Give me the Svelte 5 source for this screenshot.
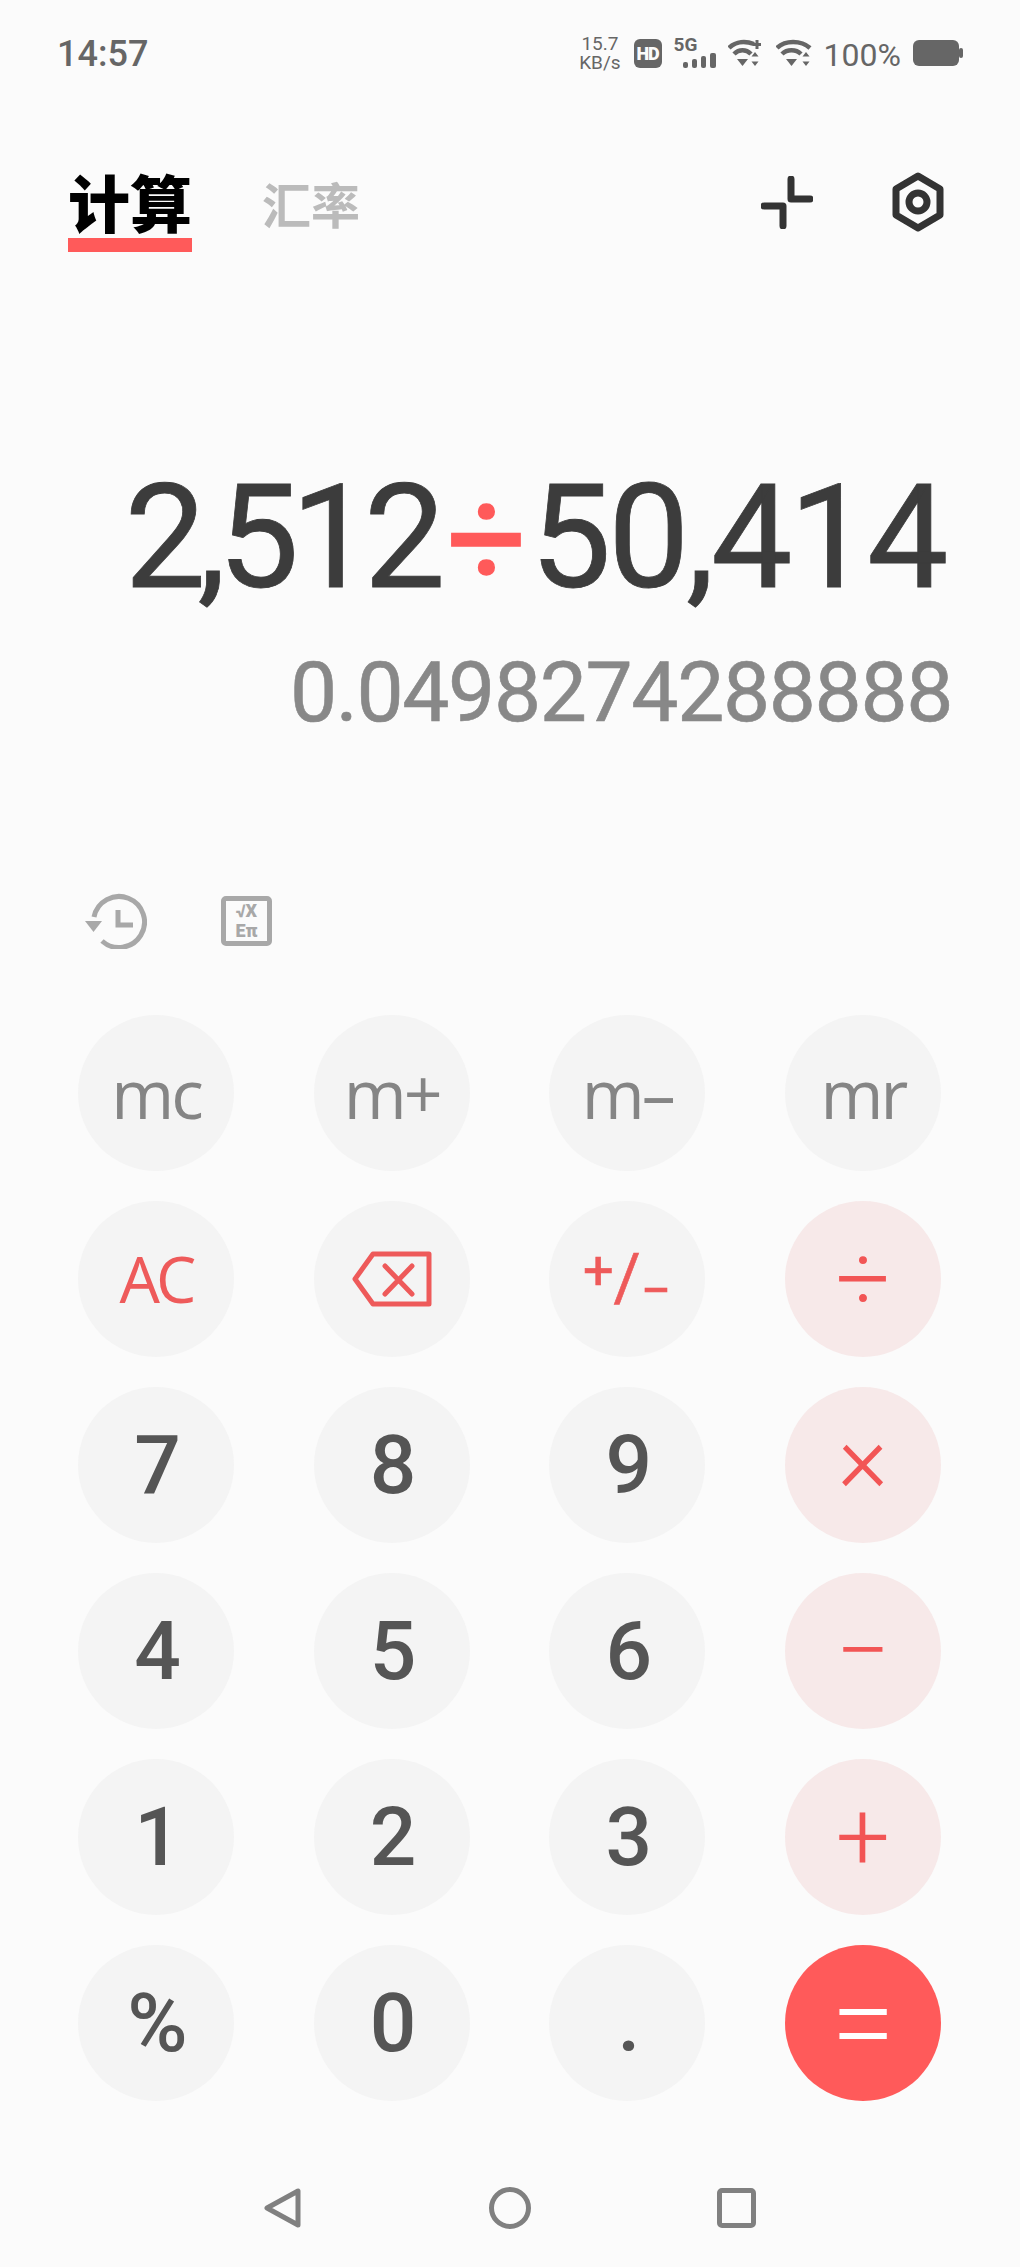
<script>
	const keys = [
		{ label: 'mc', kind: 'mem' },
		{ label: 'm+', kind: 'mem' },
		{ label: 'm–', kind: 'mem' },
		{ label: 'mr', kind: 'mem' },
		{ label: 'AC', kind: 'fn' },
		{ icon: 'back', kind: 'fn' },
		{ icon: 'sign', kind: 'fn' },
		{ label: '÷', kind: 'op' },
		{ label: '7', kind: 'num' },
		{ label: '8', kind: 'num' },
		{ label: '9', kind: 'num' },
		{ label: '×', kind: 'op times' },
		{ label: '4', kind: 'num' },
		{ label: '5', kind: 'num' },
		{ label: '6', kind: 'num' },
		{ label: '−', kind: 'op' },
		{ label: '1', kind: 'num' },
		{ label: '2', kind: 'num' },
		{ label: '3', kind: 'num' },
		{ label: '+', kind: 'op' },
		{ label: '%', kind: 'num' },
		{ label: '0', kind: 'num' },
		{ label: '.', kind: 'num' },
		{ label: '=', kind: 'eq' }
	];
</script>

<div class="page">
	<header class="status">
		<span class="time">14:57</span>
		<div class="status-right">
			<div class="speed"><span>15.7</span><span>KB/s</span></div>
			<span class="hd">HD</span>
			<div class="net">
				<span class="five-g">5G</span>
				<svg width="33" height="15" viewBox="0 0 33 15" fill="#666">
					<rect x="0" y="9" width="5" height="6" rx="2" />
					<rect x="9" y="6" width="5" height="9" rx="2" />
					<rect x="18" y="3" width="5" height="12" rx="2" />
					<rect x="27" y="0" width="6" height="15" rx="2" />
				</svg>
			</div>
			<svg class="wifi" width="36" height="28" viewBox="0 0 36 28" fill="none" stroke="#666" stroke-width="4.500">
				<path d="M1 9C8 2 18 2 26 5" />
				<path d="M6 15C11 10 18 10 23 15" />
				<path d="M29 1V10M25 5.500H33" stroke-width="3" />
				<path d="M9 20h11l-5.500 7z" fill="#666" stroke="none" />
				<path d="M27 13l3.500 4.500h-7zM27 27l3.500-4.500h-7z" fill="#666" stroke="none" />
			</svg>
			<svg class="wifi" width="36" height="28" viewBox="0 0 36 28" fill="none" stroke="#666" stroke-width="4.500">
				<path d="M1 9C9 1 25 1 34 9" />
				<path d="M6 15C11 10 20 10 25 15" />
				<path d="M10 20h11l-5.500 7z" fill="#666" stroke="none" />
				<path d="M30 13l3.500 4.500h-7zM30 27l3.500-4.500h-7z" fill="#666" stroke="none" />
			</svg>
			<span class="percent">100%</span>
			<svg width="50" height="26" viewBox="0 0 50 26" fill="#666">
				<rect x="0" y="0" width="46" height="26" rx="6" />
				<rect x="46" y="8" width="4" height="10" rx="2" />
			</svg>
		</div>
	</header>

	<nav class="tabs">
		<div class="tab-group">
			<div class="tab active">计算</div>
			<div class="tab">汇率</div>
		</div>
		<div class="tab-icons">
			<svg width="52" height="53" viewBox="0 0 52 53" fill="none" stroke="#333" stroke-width="7" stroke-linecap="round" stroke-linejoin="round">
				<path d="M30 3V23H49" />
				<path d="M3 30H22V50" />
			</svg>
			<svg width="52" height="60" viewBox="0 0 52 60" fill="none" stroke="#333" stroke-width="7">
				<path d="M26 4L48 17V43L26 56L4 43V17Z" stroke-linejoin="round" />
				<circle cx="26" cy="30" r="9" />
			</svg>
		</div>
	</nav>

	<section class="display">
		<div class="expr"><span class="lhs">2,512</span><span class="op-sign">÷</span><span class="rhs">50,414</span></div>
		<div class="result">0.0498274288888</div>
	</section>

	<div class="tools">
		<svg width="62" height="56" viewBox="0 0 62 56" fill="none" stroke="#a8a8a8" stroke-width="5">
			<path d="M9 24A25.500 25.500 0 1 1 17 48" />
			<path d="M33 17V32H48" />
			<path d="M0 28H17L8.500 39Z" fill="#a8a8a8" stroke="none" />
		</svg>
		<div class="sci">
			<span>√X</span>
			<span>Eπ</span>
		</div>
	</div>

	<div class="keypad">
		{#each keys as key}
			<button class="key {key.kind}">
				{#if key.icon === 'back'}
					<svg width="80" height="56" viewBox="0 0 80 56" fill="none" stroke="#ee5a5a" stroke-width="5" stroke-linejoin="round">
						<path d="M77 3H21L3 28L21 53H77Z" />
						<path d="M33 15L60 43M60 15L33 43" stroke-linecap="round" />
					</svg>
				{:else if key.icon === 'sign'}
					<span class="sign"><span class="plus">+</span><span class="slash">/</span><span class="minus">−</span></span>
				{:else}
					{key.label}
				{/if}
			</button>
		{/each}
	</div>

	<footer class="navbar">
		<svg width="38" height="40" viewBox="0 0 38 40" fill="none" stroke="#808080" stroke-width="5" stroke-linejoin="round">
			<path d="M34 3V37L3 20Z" />
		</svg>
		<div class="home"></div>
		<div class="recent"></div>
	</footer>
</div>

<style>
	:global(body) {
		background: #fbfbfb;
	}

	.page {
		width: 1020px;
		height: 2267px;
		background: #fbfbfb;
		display: flex;
		flex-direction: column;
		font-family: Roboto, 'Noto Sans', sans-serif;
		overflow: hidden;
	}

	.status {
		height: 106px;
		box-sizing: border-box;
		padding: 36px 57px 0 57px;
		display: flex;
		justify-content: space-between;
		align-items: flex-start;
		color: #666;
	}

	.time {
		font-size: 36px;
		font-weight: 500;
		line-height: 36px;
	}

	.status-right {
		display: flex;
		align-items: center;
		height: 34px;
		gap: 12px;
	}

	.speed {
		display: flex;
		flex-direction: column;
		align-items: center;
		font-size: 19px;
		line-height: 19px;
		margin-right: 1px;
	}

	.hd {
		width: 28px;
		height: 29px;
		border-radius: 6px;
		background: #666;
		color: #fbfbfb;
		font-size: 18px;
		font-weight: 900;
		line-height: 29px;
		text-align: center;
		letter-spacing: -1px;
	}

	.net {
		width: 42px;
		height: 30px;
		display: flex;
		flex-direction: column;
		align-items: flex-end;
		position: relative;
	}

	.five-g {
		position: absolute;
		left: 0;
		top: -2px;
		font-size: 19px;
		font-weight: 700;
		line-height: 18px;
	}

	.net svg {
		margin-top: 15px;
	}

	.wifi {
		flex: none;
	}

	.percent {
		font-size: 32px;
		line-height: 34px;
		margin-top: 4px;
	}

	.tabs {
		height: 164px;
		display: flex;
		justify-content: space-between;
		padding: 0 76px 0 68px;
		align-items: flex-start;
	}

	.tab-group {
		display: flex;
		align-items: flex-end;
		gap: 70px;
		padding-top: 62px;
	}

	.tab {
		font-family: 'Noto Sans CJK SC', sans-serif;
		font-size: 49px;
		line-height: 60px;
		font-weight: 700;
		color: #bbb;
		padding-bottom: 19px;
	}

	.tab.active {
		font-size: 62px;
		line-height: 66px;
		font-weight: 900;
		color: #000;
		padding-bottom: 4px;
		border-bottom: 14px solid #ff5a5a;
	}

	.tab-icons {
		display: flex;
		gap: 79px;
		align-items: center;
		padding-top: 66px;
	}

	.display {
		height: 604px;
		box-sizing: border-box;
		padding: 192px 70px 0 0;
		text-align: right;
		white-space: nowrap;
	}

	.expr {
		font-size: 145px;
		line-height: 150px;
		color: #3c3c3c;
		margin-right: 5px;
		-webkit-text-stroke: 0.8px #3c3c3c;
	}

	.lhs {
		letter-spacing: -8.400px;
	}

	.rhs {
		letter-spacing: -3.500px;
	}

	.op-sign {
		color: #ff5a5a;
		font-size: 140px;
		margin: 0 3px 0 10px;
		-webkit-text-stroke: 1.5px #ff5a5a;
	}

	.result {
		font-size: 84px;
		line-height: 100px;
		letter-spacing: -1.4px;
		color: #888;
		margin-top: 29px;
		margin-right: -2px;
		-webkit-text-stroke: 0.6px #888;
	}

	.tools {
		height: 94px;
		display: flex;
		align-items: center;
		gap: 74px;
		padding-left: 85px;
	}

	.sci {
		box-sizing: border-box;
		width: 51px;
		height: 50px;
		border: 5px solid #a8a8a8;
		border-radius: 5px;
		color: #a8a8a8;
		font-size: 18px;
		font-weight: 900;
		line-height: 20px;
		display: flex;
		flex-direction: column;
		align-items: center;
		justify-content: center;
	}

	.keypad {
		display: grid;
		grid-template-columns: repeat(4, 156px);
		justify-content: space-between;
		row-gap: 30px;
		padding: 0 79px 0 78px;
		margin-top: 47px;
	}

	.key {
		width: 156px;
		height: 156px;
		padding: 0;
		border: none;
		border-radius: 50%;
		background: #f4f4f4;
		font-family: inherit;
		display: flex;
		align-items: center;
		justify-content: center;
		line-height: 1;
	}

	.mem {
		font-family: 'Open Sans', sans-serif;
		font-size: 68px;
		letter-spacing: -3px;
		color: #858585;
	}

	.fn {
		font-family: 'Open Sans', sans-serif;
		font-size: 64px;
		letter-spacing: -4px;
		color: #ee5a5a;
	}

	.num {
		font-size: 82px;
		font-weight: 500;
		color: #555;
		padding-left: 3px;
	}

	.op {
		background: #f7e9e9;
		font-size: 96px;
		font-weight: 350;
		color: #f25555;
	}

	.times {
		padding-bottom: 14px;
	}

	.eq {
		background: #ff5a5a;
		font-size: 116px;
		font-weight: 300;
		color: #fff;
	}

	.sign {
		display: flex;
		align-items: center;
		font-family: Roboto, sans-serif;
		font-size: 54px;
		letter-spacing: 0;
		-webkit-text-stroke: 0.6px #ee5a5a;
	}

	.plus {
		transform: translateY(-8px);
	}

	.slash {
		font-size: 66px;
	}

	.minus {
		transform: translateY(12px);
	}

	.navbar {
		margin-top: 85px;
		height: 44px;
		display: flex;
		align-items: center;
		justify-content: space-between;
		padding: 0 264px 0 264px;
	}

	.home {
		box-sizing: border-box;
		width: 42px;
		height: 42px;
		border: 5px solid #808080;
		border-radius: 50%;
	}

	.recent {
		box-sizing: border-box;
		width: 39px;
		height: 40px;
		border: 5px solid #808080;
		border-radius: 5px;
	}
</style>
